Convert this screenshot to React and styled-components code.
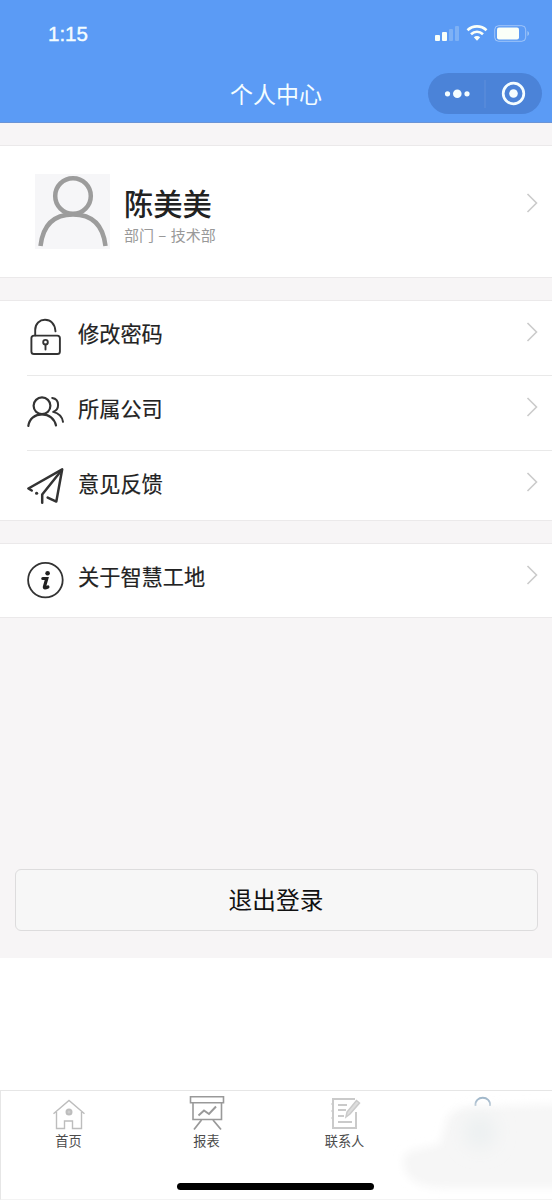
import React from 'react';
import styled, { createGlobalStyle } from 'styled-components';

const GlobalStyle = createGlobalStyle`
    * {
        box-sizing: border-box;
    }
    body {
        margin: 0;
        background: #fff;
        font-family: 'Noto Sans CJK SC', sans-serif;
    }
`;

const Screen = styled.div`
    display: flex;
    flex-direction: column;
    width: 552px;
    height: 1200px;
    overflow: hidden;
    background: #fff;
`;

// 顶部蓝色区域
const Header = styled.header`
    display: flex;
    flex-direction: column;
    flex: none;
    height: 123px;
    background: #5b9bf5;
    border-bottom: 1px solid #6b94d6;
    color: #f4fdff;
`;

const StatusBar = styled.div`
    display: flex;
    align-items: center;
    justify-content: space-between;
    height: 66px;
    padding: 0 22px 0 48px;
`;

const Clock = styled.span`
    padding-top: 1px;
    font-family: 'Liberation Sans', sans-serif;
    font-size: 20.5px;
    line-height: 24px;
    -webkit-text-stroke: 0.4px currentColor;
`;

const StatusIcons = styled.svg`
    display: block;
    width: 96px;
    height: 20px;
`;

const NavBar = styled.div`
    display: grid;
    grid-template-columns: 124px 1fr 124px;
    align-items: center;
    height: 54px;
`;

const Title = styled.h1`
    grid-column: 2;
    margin: 0;
    padding-bottom: 1px;
    font-size: 23px;
    font-weight: 400;
    line-height: 34px;
    text-align: center;
`;

// 小程序胶囊按钮
const Capsule = styled.div`
    display: flex;
    align-items: center;
    width: 114px;
    height: 41px;
    border-radius: 21px;
    background: #4b83d8;
`;

const CapsuleIcon = styled.svg`
    display: block;
    width: 114px;
    height: 41px;
`;

const Content = styled.main`
    display: flex;
    flex-direction: column;
    flex: none;
    height: 835px;
    padding-top: 22px;
    background: #f7f5f6;
`;

const Card = styled.section`
    flex: none;
    height: ${({ $height }) => $height}px;
    margin-bottom: 22px;
    background: #fff;
    border-top: 1px solid #ebe9ea;
    border-bottom: 1px solid #ebe9ea;
`;

const Profile = styled.div`
    display: flex;
    height: 100%;
    padding: 28px 14px 0 35px;
`;

const Avatar = styled.svg`
    width: 75px;
    height: 75px;
    background: #f6f6f8;
`;

const ProfileText = styled.div`
    flex: 1;
    padding: 7px 0 0 14px;
`;

const Name = styled.div`
    color: #222;
    font-size: 29.3px;
    font-weight: 500;
    line-height: 42px;
`;

const Department = styled.div`
    padding-top: 1px;
    color: #999;
    font-size: 15px;
    line-height: 22px;
    word-spacing: 1px;
`;

const Arrow = styled.svg`
    flex: none;
    width: 12px;
    height: 20px;
    margin-top: ${({ $top }) => $top}px;
    fill: none;
    stroke: #cbcbcb;
    stroke-width: 1.6;
`;

const Row = styled.div`
    display: flex;
    height: ${({ $height = 75 }) => $height}px;
    margin-left: 27px;
    padding-right: 14px;

    & + & {
        border-top: 1px solid #e9e9e9;
    }
`;

const RowIcon = styled.svg`
    flex: none;
    width: 38px;
    height: 40px;
    margin-top: 16px;
    fill: none;
    stroke: #333;
    stroke-width: 1.9;
    stroke-linecap: round;
    stroke-linejoin: round;
`;

const RowLabel = styled.div`
    flex: 1;
    padding: 17px 0 0 13px;
    color: #222;
    font-size: 21.2px;
    line-height: 30px;
    -webkit-text-stroke: 0.2px #222;
`;

const LogoutButton = styled.button`
    flex: none;
    height: 62px;
    margin: 229px 14px 0 15px;
    padding: 0 1px 2px 0;
    border: 1px solid #dddcdd;
    border-radius: 6px;
    background: #f7f7f7;
    color: #111;
    font-family: inherit;
    font-size: 23.7px;
    line-height: 34px;
`;

// 底部导航
const TabBar = styled.nav`
    position: relative;
    display: grid;
    grid-template-columns: repeat(4, 138px);
    flex: none;
    height: 110px;
    margin-top: 132px;
    border: 1px solid #e6e6e6;
    border-right: 0;
    border-bottom-color: #f3f3f3;
`;

const Tab = styled.div`
    display: flex;
    flex-direction: column;
    align-items: center;
    padding: 4px 3px 0 0;
    color: #4c4c4c;
    font-size: 13.2px;
    line-height: 20px;
`;

const TabIcon = styled.svg`
    width: 36px;
    height: 36px;
    fill: none;
    stroke: ${({ $color = '#bdbdbd' }) => $color};
    stroke-width: ${({ $weight = 1.4 }) => $weight};
`;

// 右下角的模糊遮罩
const Haze = styled.svg`
    position: absolute;
    right: 0;
    bottom: -1px;
    width: 160px;
    height: 110px;
`;

const HomeIndicator = styled.div`
    position: absolute;
    left: 176px;
    bottom: 9px;
    width: 197px;
    height: 7px;
    border-radius: 4px;
    background: #000;
`;

const LockIcon = () => (
    <RowIcon viewBox="0 -1 38 40">
        <rect x="4.400" y="17.600" width="28.500" height="18.400" rx="2.600" />
        <path d="M8.200 17.400V12C8.200 5.500 12.700 1.800 18 1.800c5.600 0 9.900 4 10.500 11.600" />
        <circle cx="18.500" cy="24.200" r="2.300" />
        <path d="M18.500 26.700v4.800" />
    </RowIcon>
);

const CompanyIcon = () => (
    <RowIcon viewBox="0 -1 38 40">
        <circle cx="15" cy="12.800" r="8.400" strokeWidth="2.200" />
        <path d="M1.300 33C2.400 25.500 8 21.300 15 21.300c7 0 12.500 4.200 14 11.200" strokeWidth="2.200" />
        <path d="M25.200 5c3.600.5 5.900 3.300 5.900 7 0 3.300-2 5.800-4.900 6.900 5.200 1.200 8.900 4.800 9.800 9.900" strokeWidth="2" />
    </RowIcon>
);

const FeedbackIcon = () => (
    <RowIcon viewBox="0 0 38 40">
        <path d="M4.700 23.500L1.400 21.500 35.200 2.300 29.300 34.600 20.700 30.600" strokeWidth="2.500" />
        <path d="M34.400 3.500L15.200 27.500v8.300" strokeWidth="2.500" />
        <path d="M9.500 26.300h.2" strokeWidth="3" />
    </RowIcon>
);

const AboutIcon = () => (
    <RowIcon viewBox="0 0 38 40">
        <circle cx="18.400" cy="20.100" r="17.300" strokeWidth="1.800" />
        <circle cx="20.600" cy="13.300" r="2.300" fill="#222" stroke="none" />
        <path
            d="M15.800 18.500h4l-2.400 8.400c-.3 1.300.9 1.300 3.500.1"
            stroke="#222"
            strokeWidth="3.200"
            strokeLinejoin="miter"
        />
    </RowIcon>
);

const RightArrow = ({ top }) => (
    <Arrow viewBox="0 0 12 20" $top={top}>
        <path d="M1.500 1L10.500 10 1.500 19" />
    </Arrow>
);

const menuItems = [
    { label: '修改密码', Icon: LockIcon, height: 74 },
    { label: '所属公司', Icon: CompanyIcon },
    { label: '意见反馈', Icon: FeedbackIcon, height: 70 },
];

const MenuRow = ({ label, Icon, height }) => (
    <Row $height={height}>
        <Icon />
        <RowLabel>{label}</RowLabel>
        <RightArrow top={21} />
    </Row>
);

const App = () => {
    return (
        <Screen>
            <GlobalStyle />
            <Header>
                <StatusBar>
                    <Clock>1:15</Clock>
                    <StatusIcons viewBox="0 0 96 20" fill="#fafff8">
                        <rect x="1" y="12" width="5" height="6" rx="1" />
                        <rect x="8" y="9" width="5" height="9" rx="1" />
                        <rect x="15" y="6" width="4" height="12" rx="1" opacity=".22" />
                        <rect x="21" y="3" width="4" height="15" rx="1" opacity=".22" />
                        <g fill="none" stroke="#fafff8" strokeWidth="2.700">
                            <path d="M33.500 7.200c5.500-5 13.500-5 19 0" />
                            <path d="M37 11.300c3.600-3.200 8.400-3.200 12 0" />
                        </g>
                        <path d="M39.800 14.200c1.900-1.600 4.500-1.600 6.400 0L43 17.800z" />
                        <rect x="60.700" y="2.700" width="31" height="15.600" rx="4" fill="none" stroke="#fff" opacity=".42" />
                        <rect x="63" y="4.600" width="22" height="11.800" rx="2" />
                        <path d="M93.500 8v5c1.800-.7 1.800-4.300 0-5z" opacity=".5" />
                    </StatusIcons>
                </StatusBar>
                <NavBar>
                    <Title>个人中心</Title>
                    <Capsule>
                        <CapsuleIcon viewBox="0 0 114 41" fill="#f4fdff">
                            <circle cx="19.500" cy="20.800" r="2.600" />
                            <circle cx="29.300" cy="20.800" r="4.300" />
                            <circle cx="39" cy="20.800" r="2.600" />
                            <path d="M57 7v28" stroke="#608fdb" />
                            <circle cx="85.500" cy="20.500" r="10.300" fill="none" stroke="#f4fdff" strokeWidth="2.700" />
                            <circle cx="85.500" cy="20.500" r="4.300" />
                        </CapsuleIcon>
                    </Capsule>
                </NavBar>
            </Header>
            <Content>
                <Card $height={133}>
                    <Profile>
                        <Avatar viewBox="0 0 75 75" fill="none" stroke="#9c9c9c" strokeWidth="4.500">
                            <circle cx="38" cy="22" r="17.800" />
                            <path d="M5.500 72C8 50 20 40.500 38 40.500S68 50 70.500 72" />
                        </Avatar>
                        <ProfileText>
                            <Name>陈美美</Name>
                            <Department>部门 – 技术部</Department>
                        </ProfileText>
                        <RightArrow top={19} />
                    </Profile>
                </Card>
                <Card $height={221}>
                    {menuItems.map((item) => (
                        <MenuRow key={item.label} {...item} />
                    ))}
                </Card>
                <Card $height={75}>
                    <MenuRow label="关于智慧工地" Icon={AboutIcon} />
                </Card>
                <LogoutButton>退出登录</LogoutButton>
            </Content>
            <TabBar>
                <Tab>
                    <TabIcon viewBox="0 0 36 36">
                        <path d="M5.500 17V33.500h8V26h8v7.500h9V17M2.500 18.800L18 5.500l15.500 13.300" />
                        <circle cx="18" cy="17" r="2.500" fill="#ccc" strokeWidth="2" />
                    </TabIcon>
                    首页
                </Tab>
                <Tab>
                    <TabIcon viewBox="0 0 36 36" $color="#999">
                        <path d="M1.500 1.800h33v6h-33zM4 7.800h28.500v16.700H4z" strokeWidth="1.600" />
                        <path d="M12.500 25L5 34.500M24 25l8 9.500" strokeWidth="1.800" />
                        <path d="M9.500 20.500l5.500-5 5 3.500 7-7.500" strokeWidth="2" />
                    </TabIcon>
                    报表
                </Tab>
                <Tab>
                    <TabIcon viewBox="0 0 36 36" $color="#cacaca" $weight={2}>
                        <path d="M28 4H6v5H4.500M6 9v7H4.500M6 16v7H4.500M6 23v10h23V17" />
                        <path d="M11 10h9M11 15h8M11 21h6M11 27h14" />
                        <path d="M19 22l1-5L29.500 5.500l3 2.500L23 19z" fill="#ddd" strokeWidth="1.500" />
                    </TabIcon>
                    联系人
                </Tab>
                <Tab>
                    <TabIcon viewBox="0 0 36 36" $color="#9fb6c9" $weight={1.800}>
                        <path d="M10.500 11C9 0 26.500 0 25 11" />
                    </TabIcon>
                </Tab>
                <Haze viewBox="0 0 160 110">
                    <defs>
                        <filter id="soft" x="-20%" y="-20%" width="150%" height="140%">
                            <feGaussianBlur stdDeviation="4" />
                        </filter>
                        <filter id="softer" x="-100%" y="-100%" width="300%" height="300%">
                            <feGaussianBlur stdDeviation="9" />
                        </filter>
                    </defs>
                    <path
                        d="M54 31Q58 18 76 17L170 14V98H50Q18 98 12 78Q7 61 26 59L48 54Z"
                        fill="#f6f6f6"
                        filter="url(#soft)"
                    />
                    <ellipse cx="88" cy="42" rx="16" ry="17" fill="#ecf0f1" filter="url(#softer)" />
                </Haze>
                <HomeIndicator />
            </TabBar>
        </Screen>
    );
};

export default App;
